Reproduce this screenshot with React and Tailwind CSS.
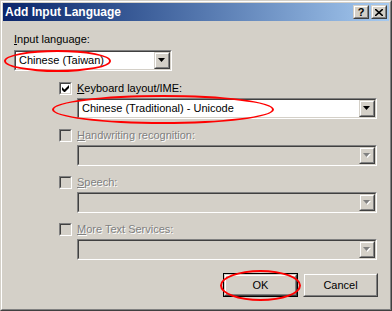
import React from "react";

const Sunken = ({ className = "", children }) => (
	<div className={`border border-t-[#808080] border-l-[#808080] border-r-white border-b-white ${className}`}>
		<div className="h-full w-full border border-t-[#404040] border-l-[#404040] border-r-[#d4d0c8] border-b-[#d4d0c8]">
			{children}
		</div>
	</div>
);

const Raised = ({ className = "", children }) => (
	<div className={`border border-t-[#d4d0c8] border-l-[#d4d0c8] border-r-[#404040] border-b-[#404040] bg-[#d4d0c8] ${className}`}>
		<div className="flex h-full w-full items-center justify-center border border-t-white border-l-white border-r-[#808080] border-b-[#808080]">
			{children}
		</div>
	</div>
);

const Arrow = ({ disabled }) => (
	<svg width="8" height="5" viewBox="0 0 8 5" className="block">
		{disabled && <path d="M1 1h7L4.5 5z" fill="#ffffff" />}
		<path d="M0 0h7L3.5 4z" fill={disabled ? "#808080" : "#000000"} />
	</svg>
);

const Combo = ({ className, text, disabled }) => (
	<Sunken className={`h-[21px] ${className}`}>
		<div className={`flex h-full ${disabled ? "bg-[#d4d0c8]" : "bg-white"}`}>
			<div className="flex-1 pl-[3px] leading-[17px]">{text}</div>
			<Raised className="h-[17px] w-[16px]">
				<Arrow disabled={disabled} />
			</Raised>
		</div>
	</Sunken>
);

const CheckRow = ({ checked, disabled, letter, rest }) => (
	<div className="flex items-center">
		<Sunken className="h-[13px] w-[13px]">
			<div className={`flex h-full items-center justify-center ${disabled ? "bg-[#d4d0c8]" : "bg-white"}`}>
				{checked && (
					<svg width="7" height="7" viewBox="0 0 7 7" className="block">
						<path d="M0 2v3l2 2h1l4-4V0L2.5 4.5z" fill="#000" />
					</svg>
				)}
			</div>
		</Sunken>
		<span
			className={`ml-[5px] leading-[13px] ${disabled ? "text-[#808080] [text-shadow:1px_1px_0_#ffffff]" : "text-black"}`}
		>
			<span className="underline underline-offset-[1px]">{letter}</span>
			{rest}
		</span>
	</div>
);

export default function App() {
	return (
		<div
			className="relative h-[311px] w-[392px] border border-t-[#d4d0c8] border-l-[#d4d0c8] border-r-[#404040] border-b-[#404040] bg-[#d4d0c8] text-[11px] text-black"
			style={{ fontFamily: '"Liberation Sans", Arial, sans-serif' }}
		>
			<div className="h-full w-full border border-t-white border-l-white border-r-[#808080] border-b-[#808080] p-px">
				{/* title bar */}
				<div className="flex h-[18px] items-center bg-gradient-to-r from-[#0a246a] to-[#a6caf0] pl-[2px] pr-[2px]">
					<span className="flex-1 text-[12px] font-bold text-white">Add Input Language</span>
					<Raised className="h-[14px] w-[16px]">
						<span className="text-[11px] font-bold leading-none">?</span>
					</Raised>
					<Raised className="ml-[2px] h-[14px] w-[16px]">
						<svg width="8" height="7" viewBox="0 0 8 7" className="block">
							<path d="M0 0l8 7M8 0L0 7" stroke="#000" strokeWidth="1.6" />
						</svg>
					</Raised>
				</div>

				{/* body */}
				<div className="flex flex-col pl-[11px] pt-[12px]">
					<div className="leading-[13px]">
						<span className="underline underline-offset-[1px]">I</span>nput language:
					</div>
					<Combo className="mt-[4px] w-[158px]" text="Chinese (Taiwan)" />

					<div className="ml-[45px] mt-[11px] flex flex-col">
						<CheckRow checked letter="K" rest="eyboard layout/IME:" />
						<Combo className="ml-[18px] mt-[3px] w-[300px]" text="Chinese (Traditional) - Unicode" />

						<div className="mt-[10px]">
							<CheckRow disabled letter="H" rest="andwriting recognition:" />
						</div>
						<Combo className="ml-[18px] mt-[3px] w-[300px]" disabled />

						<div className="mt-[10px]">
							<CheckRow disabled letter="S" rest="peech:" />
						</div>
						<Combo className="ml-[18px] mt-[3px] w-[300px]" disabled />

						<div className="mt-[10px]">
							<CheckRow disabled letter="M" rest="ore Text Services:" />
						</div>
						<Combo className="ml-[18px] mt-[3px] w-[300px]" disabled />
					</div>

					<div className="mt-[13px] flex justify-end gap-[5px] pr-[11px]">
						<div className="border border-black">
							<Raised className="h-[22px] w-[73px]">OK</Raised>
						</div>
						<Raised className="h-[24px] w-[75px]">Cancel</Raised>
					</div>
				</div>
			</div>

			{/* red highlight marks */}
			<div className="pointer-events-none absolute left-[3px] top-[49px] h-[22px] w-[107px] rounded-[50%] border-2 border-[#ff0000]" />
			<div className="pointer-events-none absolute left-[51px] top-[94px] h-[29px] w-[222px] rounded-[50%] border-2 border-[#ff0000]" />
			<div className="pointer-events-none absolute left-[219px] top-[269px] h-[31px] w-[81px] rounded-[50%] border-2 border-[#ff0000]" />
		</div>
	);
}
